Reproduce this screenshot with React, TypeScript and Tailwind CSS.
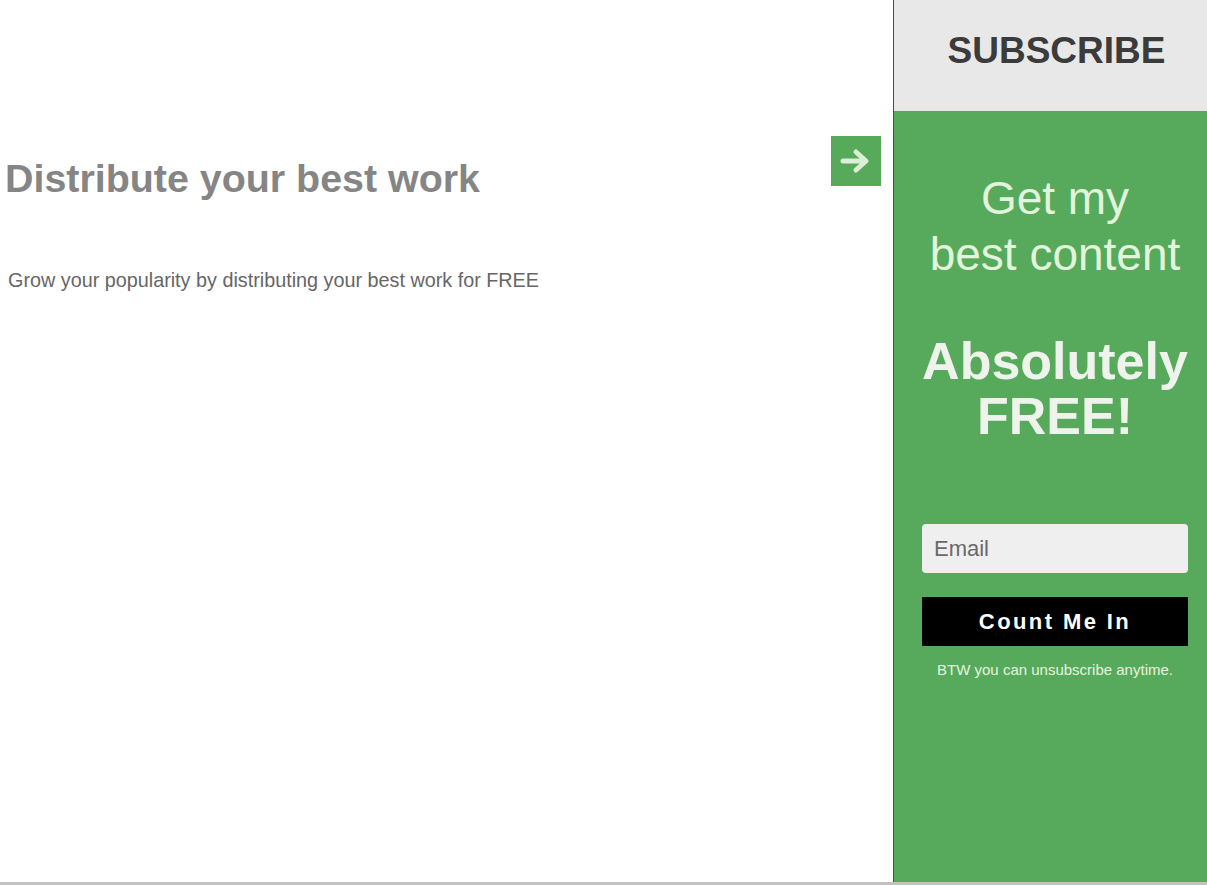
export default function App() {
  return (
    <div className="w-[1207px] h-[885px] bg-white overflow-hidden font-['Liberation_Sans',Arial,sans-serif]">
      <div className="flex h-[882px]">
        {/* main content */}
        <div className="flex flex-1">
          <div className="flex-1 pl-[5px] pt-[158px]">
            <h1 className="text-[39.4px] leading-[40px] font-bold text-[#858585]">
              Distribute your best work
            </h1>
            <p className="mt-[72px] pl-[3px] text-[19.8px] leading-[20px] text-[#666666]">
              Grow your popularity by distributing your best work for FREE
            </p>
          </div>
          <div className="pt-[136px] pr-[12px]">
            <button
              type="button"
              className="w-[50px] h-[50px] bg-[#56aa5a] flex items-center justify-center"
            >
              <svg width="34" height="30" viewBox="0 0 34 30" fill="none">
                <path
                  d="M4 15 H26 M17 6 L27 15 L17 24"
                  stroke="#dcefd6"
                  strokeWidth="5"
                  strokeLinecap="round"
                  strokeLinejoin="round"
                />
              </svg>
            </button>
          </div>
        </div>

        {/* subscribe panel */}
        <aside className="w-[314px] border-l border-[#4a4a4a] flex flex-col">
          <div className="h-[111px] bg-[#e8e8e8] pt-[32px] pl-[12px] text-center">
            <h2 className="text-[37px] leading-[37px] font-bold text-[#3b3b3b]">SUBSCRIBE</h2>
          </div>
          <div className="flex-1 bg-[#57aa5b] pl-[28px] pr-[19px] pt-[59px] text-center">
            <p className="text-[46px] leading-[56px] text-[#e2f4dc]">
              Get my
              <br />
              best content
            </p>
            <p className="mt-[52px] text-[52px] leading-[55px] font-bold text-[#eef3ec]">
              Absolutely
              <br />
              FREE!
            </p>
            <input
              type="email"
              placeholder="Email"
              className="mt-[80px] block w-full h-[49px] rounded-[4px] bg-[#efefef] px-[12px] text-[22px] text-[#555] placeholder:text-[#6a6a6a] outline-none"
            />
            <button
              type="button"
              className="mt-[24px] block w-full h-[49px] bg-black text-white text-[22px] font-bold tracking-[2.4px]"
            >
              Count Me In
            </button>
            <p className="mt-[16px] text-[15px] leading-[15px] text-[#e4f4de]">
              BTW you can unsubscribe anytime.
            </p>
          </div>
        </aside>
      </div>
      <div className="h-[3px] bg-[#c2c2c2]" />
    </div>
  );
}
